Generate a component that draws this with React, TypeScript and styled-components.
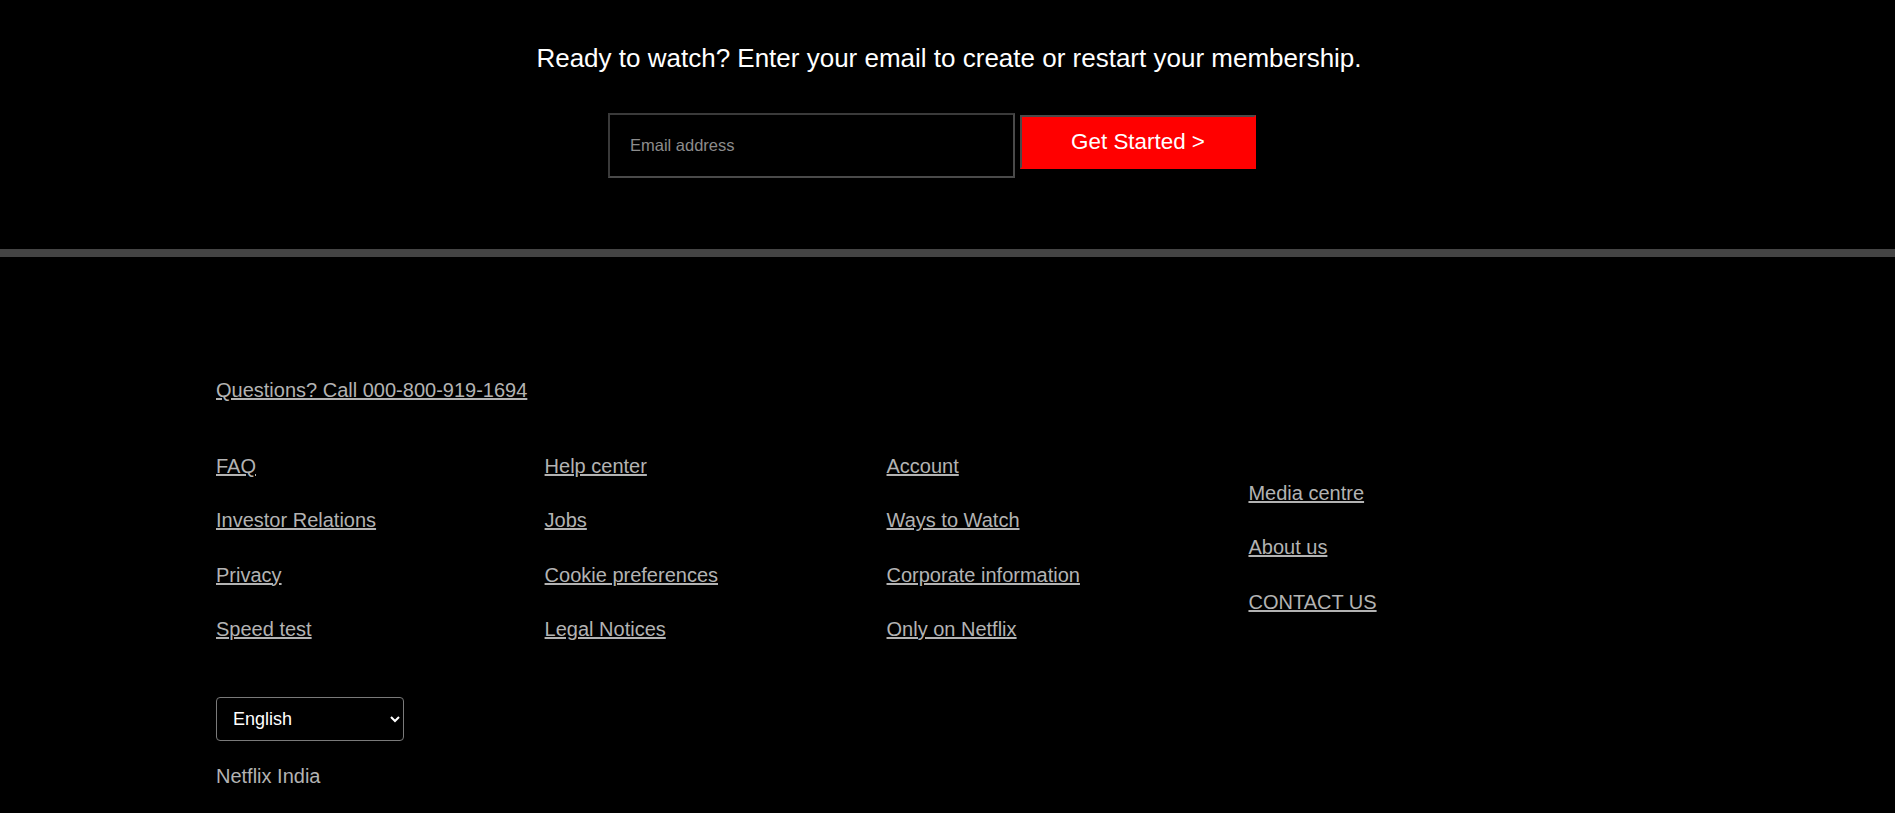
import React from 'react'
import styled, { createGlobalStyle } from 'styled-components'

const GlobalStyle = createGlobalStyle`
  html, body {
    margin: 0;
    padding: 0;
    background: #000000;
  }
  body {
    font-family: "Liberation Sans", Arial, sans-serif;
    color: #ffffff;
  }
  * {
    box-sizing: border-box;
  }
`

const Hero = styled.section`
  padding: 43px 0 71px;
  background: #000000;
`

const Heading = styled.h3`
  margin: 0;
  padding-left: 3px;
  font-size: 26px;
  font-weight: 400;
  line-height: normal;
  text-align: center;
  color: #ffffff;
`

const SignupForm = styled.form`
  display: flex;
  justify-content: center;
  align-items: flex-start;
  margin-top: 39px;
  padding-right: 31px;
`

const EmailInput = styled.input`
  width: 407px;
  height: 65px;
  padding: 0 20px;
  background: #000000;
  color: #ffffff;
  font-family: "Liberation Sans", Arial, sans-serif;
  font-size: 16.5px;
  border: 2px solid #3a3a3a;
  border-right-color: #4a4a4a;
  border-bottom-color: #4a4a4a;
  outline: none;
  &::placeholder {
    color: #8c8c8c;
  }
`

const StartButton = styled.button`
  width: 236px;
  height: 54px;
  margin: 2px 0 0 5px;
  background: #ff0000;
  color: #ffffff;
  font-family: "Liberation Sans", Arial, sans-serif;
  font-size: 22.4px;
  border: 2px solid #ff0000;
  border-top-color: #4a4a4a;
  border-left-color: #4a4a4a;
  cursor: pointer;
`

const Divider = styled.div`
  height: 8px;
  background: #444444;
`

const Footer = styled.footer`
  padding: 122px 216px 40px;
  color: #b3b3b3;
  font-size: 20px;
`

const FooterLink = styled.a`
  color: #b3b3b3;
  font-size: 20px;
  line-height: 23px;
  text-decoration: underline;
`

const Phone = styled(FooterLink)`
  display: inline-block;
`

const Columns = styled.div`
  display: flex;
  align-items: center;
  gap: 168.5px;
  margin-top: 53px;
`

const Column = styled.ul`
  display: flex;
  flex-direction: column;
  gap: 31.3px;
  margin: 0;
  padding: 0;
  list-style: none;
`

const LanguageSelect = styled.select`
  display: block;
  width: 188px;
  height: 44px;
  margin-top: 56px;
  padding: 0 12px;
  background: #000000;
  color: #ffffff;
  font-family: "Liberation Sans", Arial, sans-serif;
  font-size: 18px;
  border: 1px solid #7a7a7a;
  border-radius: 4px;
`

const Region = styled.p`
  margin: 24px 0 0;
  font-size: 20px;
  line-height: 23px;
  color: #b3b3b3;
`

const columns: string[][] = [
  ['FAQ', 'Investor Relations', 'Privacy', 'Speed test'],
  ['Help center', 'Jobs', 'Cookie preferences', 'Legal Notices'],
  ['Account', 'Ways to Watch', 'Corporate information', 'Only on Netflix'],
  ['Media centre', 'About us', 'CONTACT US'],
]

const App: React.FC = () => {
  return (
    <>
      <GlobalStyle />
      <Hero>
        <Heading>Ready to watch? Enter your email to create or restart your membership.</Heading>
        <SignupForm onSubmit={(e) => e.preventDefault()}>
          <EmailInput type="email" placeholder="Email address" />
          <StartButton type="submit">Get Started &gt;</StartButton>
        </SignupForm>
      </Hero>
      <Divider />
      <Footer>
        <Phone href="#">Questions? Call 000-800-919-1694</Phone>
        <Columns>
          {columns.map((links, i) => (
            <Column key={i}>
              {links.map((label) => (
                <li key={label}>
                  <FooterLink href="#">{label}</FooterLink>
                </li>
              ))}
            </Column>
          ))}
        </Columns>
        <LanguageSelect defaultValue="English">
          <option>English</option>
          <option>हिन्दी</option>
        </LanguageSelect>
        <Region>Netflix India</Region>
      </Footer>
    </>
  )
}

export default App
